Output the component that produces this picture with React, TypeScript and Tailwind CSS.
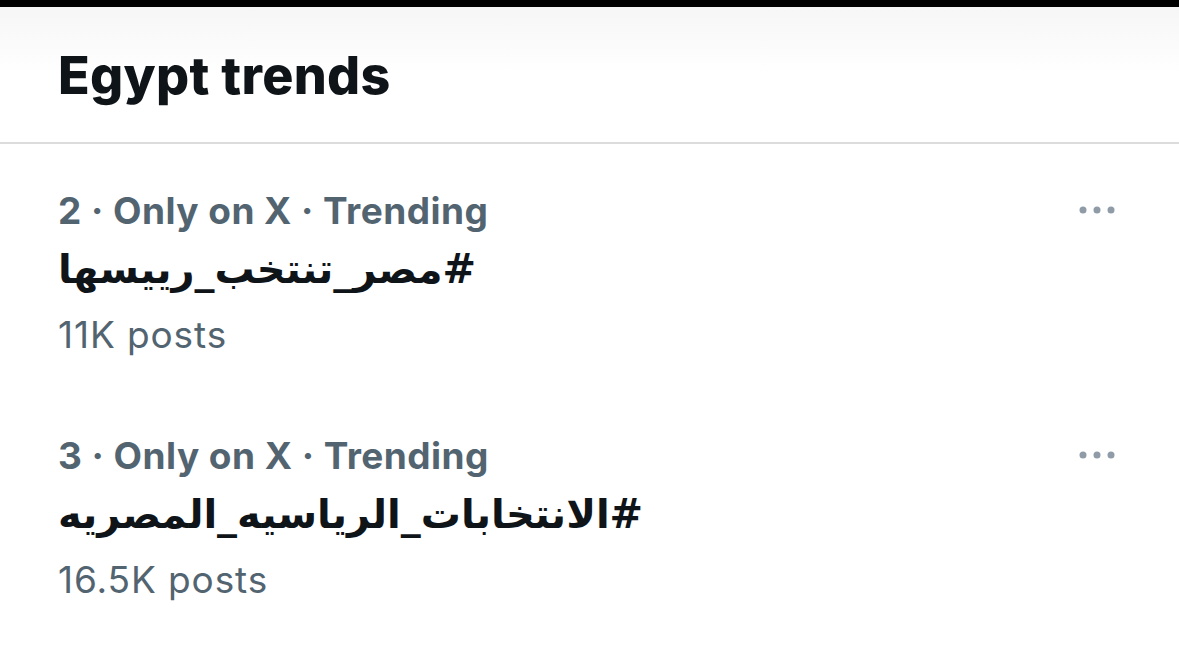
const trends = [
  { rank: 2, tag: "#مصر_تنتخب_رييسها", posts: "11K posts" },
  { rank: 3, tag: "#الانتخابات_الرياسيه_المصريه", posts: "16.5K posts" },
];

function Dots() {
  return (
    <svg width="36" height="10" viewBox="0 0 36 10" className="text-[#8f9ca8]">
      <circle cx="4" cy="5" r="3.5" fill="currentColor" />
      <circle cx="18" cy="5" r="3.5" fill="currentColor" />
      <circle cx="32" cy="5" r="3.5" fill="currentColor" />
    </svg>
  );
}

function App() {
  return (
    <div className="w-[1179px] h-[663px] bg-white overflow-hidden font-['Inter','Roboto','Liberation_Sans',sans-serif]">
      <div className="h-[7px] bg-black" />
      <div className="h-[137px] bg-gradient-to-b from-[#f6f6f6] via-white to-white border-b-2 border-[#dcdcdc] px-[58px] pt-[39px]">
        <h1 className="text-[52px] leading-[60px] font-extrabold tracking-[0.3px] text-[#0f1419]">
          Egypt trends
        </h1>
      </div>

      <div className="pt-[45px]">
        {trends.map((t) => (
          <div key={t.rank} className="flex justify-between pl-[58px] pr-[64px] h-[245px]">
            <div className="flex flex-col">
              <div className="text-[37px] leading-[44px] font-bold text-[#536471] tracking-[0.45px]">
                {t.rank} · Only on X · Trending
              </div>
              <div className="mt-[12px] text-[40px] leading-[48px] font-bold text-[#0f1419] font-['DejaVu_Sans','Noto_Sans',sans-serif]">
                <span dir="rtl">{t.tag}</span>
              </div>
              <div className="mt-[18px] text-[37px] leading-[47px] tracking-[0.9px] text-[#536471]">
                {t.posts}
              </div>
            </div>
            <div className="pt-[16px]">
              <Dots />
            </div>
          </div>
        ))}
      </div>
    </div>
  );
}

export default App;
